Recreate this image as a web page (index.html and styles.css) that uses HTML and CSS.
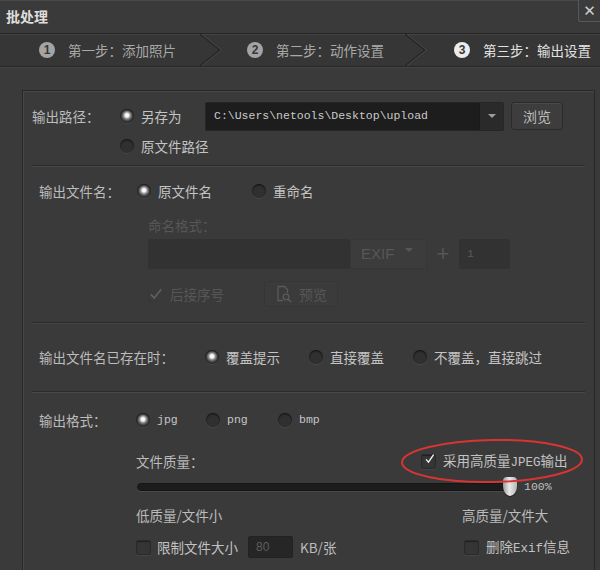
FILE: index.html
```html
<!DOCTYPE html>
<html lang="zh-CN">
<head>
    <meta charset="UTF-8">
    <title>批处理</title>
    <link rel="stylesheet" href="styles.css">
</head>
<body>
<div class="window">
    <div class="titlebar">
        <span class="title">批处理</span>
        <button class="close">✕</button>
    </div>

    <div class="steps">
        <div class="step step-one"><span class="num">1</span><span>第一步：添加照片</span></div>
        <svg class="chevron" width="22" height="32" viewBox="0 0 22 32">
            <polyline points="0,0 20,16 0,32" fill="none" stroke="#262626" stroke-width="1.5"/>
            <polyline points="1.5,0 21.5,16 1.5,32" fill="none" stroke="#484848" stroke-width="1"/>
        </svg>
        <div class="step step-two"><span class="num">2</span><span>第二步：动作设置</span></div>
        <svg class="chevron" width="22" height="32" viewBox="0 0 22 32">
            <polyline points="0,0 20,16 0,32" fill="none" stroke="#262626" stroke-width="1.5"/>
            <polyline points="1.5,0 21.5,16 1.5,32" fill="none" stroke="#484848" stroke-width="1"/>
        </svg>
        <div class="step step-three active"><span class="num">3</span><span>第三步：输出设置</span></div>
    </div>

    <div class="panel">
        <!-- output path -->
        <div class="section section-path">
            <div class="row row-path">
                <span class="label label-path">输出路径：</span>
                <label class="option opt-saveas"><span class="radio checked"></span>另存为</label>
                <div class="path-box">
                    <span class="path-text">C:\Users\netools\Desktop\upload</span>
                    <span class="drop"><span class="caret"></span></span>
                </div>
                <button class="btn btn-browse">浏览</button>
            </div>
            <div class="row row-orig">
                <label class="option"><span class="radio"></span>原文件路径</label>
            </div>
        </div>

        <!-- output file name -->
        <div class="section section-name">
            <div class="row">
                <span class="label label-name">输出文件名：</span>
                <label class="option opt-orig-name"><span class="radio checked"></span>原文件名</label>
                <label class="option"><span class="radio"></span>重命名</label>
            </div>
            <div class="rename disabled">
                <div class="rename-title">命名格式：</div>
                <div class="rename-inputs">
                    <div class="field field-pattern"></div>
                    <div class="exif-select">EXIF<span class="caret caret-dim"></span></div>
                    <span class="plus">+</span>
                    <div class="field field-start">1</div>
                </div>
                <div class="rename-bottom">
                    <label class="check-group check-seq">
                        <svg class="tick" width="16" height="16" viewBox="0 0 16 16">
                            <path d="M2 8.5 L6 12.5 L14 2.5" fill="none" stroke="#5e5e5e" stroke-width="2"/>
                        </svg>
                        <span>后接序号</span>
                    </label>
                    <button class="btn btn-preview">
                        <svg width="18" height="18" viewBox="0 0 18 18">
                            <path d="M3 1.5 H9.5 L12.5 4.5 V8 M3 1.5 V15.5 H8" fill="none" stroke="#5a5a5a" stroke-width="1.3"/>
                            <circle cx="11" cy="12" r="2.8" fill="none" stroke="#5a5a5a" stroke-width="1.3"/>
                            <path d="M13 14 L16 17" stroke="#5a5a5a" stroke-width="1.6"/>
                        </svg>
                        预览
                    </button>
                </div>
            </div>
        </div>

        <!-- existing file -->
        <div class="section section-exist">
            <div class="row">
                <span class="label label-exist">输出文件名已存在时：</span>
                <label class="option opt-exist"><span class="radio checked"></span>覆盖提示</label>
                <label class="option opt-exist"><span class="radio"></span>直接覆盖</label>
                <label class="option"><span class="radio"></span>不覆盖，直接跳过</label>
            </div>
        </div>

        <!-- output format -->
        <div class="section section-format">
            <div class="row">
                <span class="label label-format">输出格式：</span>
                <label class="option opt-jpg"><span class="radio checked"></span><span class="mono">jpg</span></label>
                <label class="option opt-png"><span class="radio"></span><span class="mono">png</span></label>
                <label class="option"><span class="radio"></span><span class="mono">bmp</span></label>
            </div>

            <div class="quality">
                <div class="q-row">
                    <span class="q-label">文件质量：</span>
                    <label class="check-group">
                        <span class="checkbox">
                            <svg width="16" height="16" viewBox="0 0 16 16">
                                <path d="M3 8.5 L6.5 12.5 L14 1.5" fill="none" stroke="#f2f2f2" stroke-width="2"/>
                            </svg>
                        </span>
                        <span>采用高质量<span class="mono">JPEG</span>输出</span>
                    </label>
                </div>
                <div class="q-row slider-row">
                    <div class="track"><span class="thumb"></span></div>
                    <span class="mono percent">100%</span>
                </div>
                <div class="q-row q-ends">
                    <span class="q-low">低质量/文件小</span>
                    <span>高质量/文件大</span>
                </div>
                <div class="q-row q-limit">
                    <div class="limit-group">
                        <label class="check-group"><span class="checkbox"></span><span>限制文件大小</span></label>
                        <div class="field field-size">80</div>
                        <span class="unit">KB/张</span>
                    </div>
                    <label class="check-group"><span class="checkbox"></span><span>删除<span class="mono">Exif</span>信息</span></label>
                </div>

                <svg class="mark" width="186" height="48" viewBox="0 0 186 48">
                    <ellipse cx="93" cy="24" rx="90" ry="21" fill="none" stroke="#d83434" stroke-width="2" transform="rotate(-1 93 24)"/>
                </svg>
            </div>
        </div>
    </div>
</div>
</body>
</html>
```

FILE: styles.css
```css
* {
    box-sizing: border-box;
}
html, body {
    margin: 0;
    height: 570px;
    overflow: hidden;
}
body {
    background-color: #3a3a3a;
    font-family: "Noto Sans CJK SC", sans-serif;
    font-size: 13.5px;
    line-height: 20px;
    color: #bcbcbc;
}
.mono {
    font-family: "Liberation Mono", "Noto Sans CJK SC", monospace;
    font-size: 11.5px;
}
.check-group .mono {
    font-size: 12.5px;
}

/* title bar */
.titlebar {
    height: 33px;
    display: flex;
    justify-content: space-between;
    align-items: flex-start;
    border-top: 1px solid #4a4a4a;
}
.title {
    padding: 5px 0 0 6px;
    font-size: 14px;
    font-weight: bold;
    color: #dedede;
}
.close {
    width: 22px;
    height: 22px;
    margin-top: -1px;
    padding: 0;
    background-color: #3c3c3c;
    border: 1px solid #585858;
    border-top: none;
    border-right: none;
    border-radius: 0 0 0 3px;
    color: #d0d0d0;
    font-size: 15px;
    line-height: 20px;
    font-family: "DejaVu Sans", sans-serif;
}

/* steps */
.steps {
    height: 34px;
    display: flex;
    align-items: center;
    padding-left: 39px;
    background-color: #363636;
    border-top: 1px solid #262626;
    border-bottom: 1px solid #262626;
    box-shadow: inset 0 1px 0 #434343, 0 1px 0 #454545;
    color: #a9a9a9;
}
.step {
    display: flex;
    align-items: center;
    gap: 13px;
    height: 32px;
}
.step-one {
    width: 161px;
}
.step-two {
    width: 183px;
    padding-left: 25px;
}
.step-three {
    padding-left: 27px;
    color: #e2e2e2;
}
.chevron {
    flex: none;
}
.num {
    width: 16px;
    height: 16px;
    border-radius: 50%;
    background-color: #a4a4a4;
    color: #383838;
    font-family: "Liberation Sans", sans-serif;
    font-weight: bold;
    font-size: 12px;
    line-height: 16px;
    text-align: center;
}
.step-three .num {
    background-color: #ececec;
}

/* panel */
.panel {
    margin: 23px 0 0 22px;
    width: 573px;
    height: 500px;
    border: 1px solid #272727;
    box-shadow: inset 1px 1px 0 #474747;
}
.section {
    margin: 0 9px;
    border-bottom: 1px solid #2a2a2a;
    box-shadow: 0 1px 0 #474747;
}
.row {
    display: flex;
    align-items: center;
    height: 20px;
}
.label {
    flex: none;
}
.option {
    display: flex;
    align-items: center;
    gap: 7px;
    flex: none;
    color: #c4c4c4;
}
.radio {
    width: 14px;
    height: 14px;
    border-radius: 50%;
    flex: none;
    background-color: #303030;
    box-shadow: inset 0 1px 2px rgba(0, 0, 0, 0.7), 0 1px 0 rgba(255, 255, 255, 0.07);
}
.radio.checked {
    background: radial-gradient(circle at 50% 45%, #ffffff 0, #f2f2f2 1.8px, #8c8c8c 3.5px, #454545 5.5px, #2f2f2f 7px);
}

/* section: path */
.section-path {
    padding: 10px 0 9px 0;
}
.row-path {
    height: 30px;
}
.label-path {
    width: 88px;
}
.opt-saveas {
    width: 85px;
}
.path-box {
    width: 299px;
    height: 29px;
    display: flex;
    align-items: center;
    justify-content: space-between;
    background-color: #1d1d1d;
    border: 1px solid #262626;
    border-radius: 2px;
    padding-left: 8px;
    color: #c9c9c9;
}
.path-text {
    font-family: "Liberation Mono", monospace;
    font-size: 11.5px;
}
.drop {
    width: 24px;
    height: 27px;
    display: flex;
    align-items: center;
    justify-content: center;
    background-color: #2a2a2a;
    border-left: 1px solid #1a1a1a;
}
.caret {
    width: 0;
    height: 0;
    border-left: 4px solid transparent;
    border-right: 4px solid transparent;
    border-top: 4px solid #9c9c9c;
}
.btn {
    font-family: inherit;
    font-size: 14px;
    border-radius: 3px;
    padding: 0;
}
.btn-browse {
    margin-left: 7px;
    width: 52px;
    height: 28px;
    background-color: #3d3d3d;
    border: 1px solid #2a2a2a;
    box-shadow: inset 0 1px 0 #4a4a4a;
    color: #bdbdbd;
}
.row-orig {
    margin: 5px 0 0 88px;
}

/* section: name */
.section-name {
    padding: 15px 0 15px 7px;
}
.label-name {
    width: 98px;
}
.opt-orig-name {
    width: 115px;
}
.rename {
    margin-left: 109px;
    color: #575757;
}
.rename-title {
    margin-top: 15px;
    height: 18px;
    line-height: 18px;
}
.rename-inputs {
    margin-top: 5px;
    display: flex;
    align-items: center;
    height: 30px;
}
.field {
    height: 30px;
    background-color: #323232;
    border-radius: 2px;
}
.field-pattern {
    width: 202px;
}
.exif-select {
    width: 77px;
    height: 30px;
    display: flex;
    align-items: center;
    gap: 11px;
    padding-left: 10px;
    background-color: #3c3c3c;
    border: 1px solid #373737;
    border-radius: 2px;
    font-family: "Liberation Sans", sans-serif;
    font-size: 15px;
    color: #575757;
}
.caret-dim {
    border-top-color: #575757;
    margin-top: -8px;
}
.plus {
    width: 32px;
    text-align: center;
    font-family: "Liberation Sans", sans-serif;
    font-size: 22px;
    color: #555;
}
.field-start {
    width: 51px;
    padding-left: 8px;
    line-height: 30px;
    font-family: "Liberation Mono", monospace;
    font-size: 11.5px;
    color: #5a5a5a;
}
.rename-bottom {
    margin-top: 12px;
    display: flex;
    align-items: center;
    height: 26px;
}
.check-group {
    display: flex;
    align-items: center;
    gap: 7px;
    flex: none;
    color: #c2c2c2;
}
.check-seq {
    width: 116px;
    gap: 6px;
    color: #575757;
}
.tick {
    border: 1px solid #383838;
    border-radius: 2px;
}
.btn-preview {
    width: 74px;
    height: 26px;
    display: flex;
    align-items: center;
    gap: 6px;
    padding-left: 10px;
    background-color: #3b3b3b;
    border: 1px solid #363636;
    color: #575757;
}

/* section: existing */
.section-exist {
    padding: 24px 0 24px 7px;
}
.label-exist {
    width: 166px;
}
.opt-exist {
    width: 104px;
}

/* section: format */
.section-format {
    padding: 18px 0 40px 7px;
    border-bottom: none;
    box-shadow: none;
}
.label-format {
    width: 97px;
}
.opt-jpg {
    width: 70px;
}
.opt-png {
    width: 72px;
}
.quality {
    position: relative;
    margin: 21px 0 0 97px;
}
.q-row {
    display: flex;
    align-items: center;
    height: 20px;
}
.q-label {
    width: 285px;
    flex: none;
}
.checkbox {
    width: 15px;
    height: 15px;
    flex: none;
    display: flex;
    align-items: center;
    justify-content: center;
    background-color: #353535;
    border: 1px solid #2a2a2a;
    border-radius: 2px;
    box-shadow: inset 0 1px 1px rgba(0, 0, 0, 0.4), 0 1px 0 rgba(255, 255, 255, 0.06);
}
.checkbox svg {
    margin: -4px 0 0 2px;
}
.slider-row {
    margin-top: 6px;
}
.track {
    position: relative;
    width: 373px;
    height: 8px;
    margin-left: 1px;
    background-color: #1c1c1c;
    border: 1px solid #161616;
    border-radius: 4px;
    box-shadow: 0 1px 0 #4a4a4a;
}
.thumb {
    position: absolute;
    right: -8px;
    top: -7px;
    width: 14px;
    height: 19px;
    border-radius: 4px 4px 7px 7px / 4px 4px 10px 10px;
    background: linear-gradient(90deg, #9a9a9a, #e8e8e8 45%, #b5b5b5);
    box-shadow: 0 1px 1px rgba(0, 0, 0, 0.5);
}
.percent {
    margin-left: 14px;
    color: #c0c0c0;
}
.q-ends {
    margin-top: 8px;
}
.q-low {
    width: 326px;
    flex: none;
}
.q-limit {
    margin-top: 11px;
    height: 22px;
}
.limit-group {
    width: 328px;
    display: flex;
    align-items: center;
    flex: none;
}
.limit-group .check-group {
    gap: 6px;
    width: 112px;
}
.field-size {
    width: 45px;
    height: 22px;
    padding-left: 7px;
    background-color: #262626;
    border: 1px solid #222;
    line-height: 20px;
    font-family: "Liberation Sans", sans-serif;
    font-size: 12px;
    color: #5e5e5e;
}
.unit {
    margin-left: 7px;
}
.mark {
    position: absolute;
    left: 263px;
    top: -14px;
}
```
